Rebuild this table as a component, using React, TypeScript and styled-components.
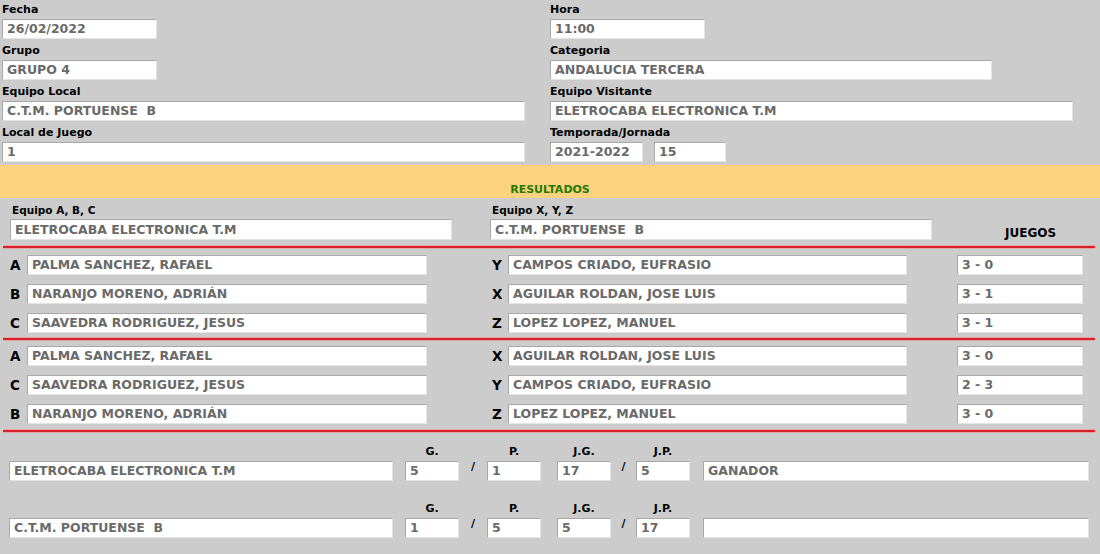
import styled, { createGlobalStyle } from "styled-components";

const GlobalStyle = createGlobalStyle`
  html, body {
    margin: 0;
    padding: 0;
    background: #cccccc;
  }
  body {
    font-family: "DejaVu Sans", Verdana, sans-serif;
    color: #000;
  }
`;

const Page = styled.div`
  width: 1100px;
  min-height: 554px;
  background: #cccccc;
`;

// cabecera con los datos del partido
const Header = styled.div`
  display: grid;
  grid-template-columns: 548px 1fr;
  padding-left: 2px;
`;

const Field = styled.div`
  margin-bottom: 2px;
`;

const Label = styled.div`
  font-size: 11px;
  font-weight: bold;
  line-height: 19px;
  height: 19px;
  white-space: nowrap;
`;

const TextBox = styled.div<{ $w: number; $h?: number }>`
  box-sizing: border-box;
  width: ${(p) => p.$w}px;
  height: ${(p) => p.$h ?? 20}px;
  background: #fff;
  border: 1px solid;
  border-color: #a8a8a8 #e4e4e4 #e4e4e4 #a8a8a8;
  color: #6a6a6a;
  font-size: 12.5px;
  font-weight: bold;
  line-height: ${(p) => (p.$h ?? 20) - 2}px;
  padding-left: 4px;
  white-space: pre;
  overflow: hidden;
`;

const BoxPair = styled.div`
  display: flex;
  gap: 11px;
`;

const Band = styled.div`
  margin-top: 1px;
  height: 33px;
  background: #fdd27e;
  display: flex;
  align-items: flex-end;
  justify-content: center;
  color: #1f7a00;
  font-size: 11px;
  font-weight: bold;
  line-height: 13px;
  padding-bottom: 2px;
  box-sizing: border-box;
`;

const TeamRow = styled.div`
  display: flex;
  align-items: flex-end;
  padding-left: 10px;
`;

const TeamCol = styled.div<{ $gap?: number }>`
  margin-left: ${(p) => p.$gap ?? 0}px;
`;

const TeamLabel = styled.div`
  font-size: 10.5px;
  font-weight: bold;
  line-height: 16px;
  margin-top: 4px;
  margin-bottom: 1px;
  padding-left: 2px;
`;

const JuegosHead = styled.div`
  margin-left: 73px;
  font-size: 12px;
  font-weight: bold;
  line-height: 14px;
`;

const Divider = styled.div<{ $top: number }>`
  margin: ${(p) => p.$top}px 5px 0 3px;
  height: 2px;
  background: #d8222b;
  box-shadow: 0 1px 0 #e6a3a3, 0 -1px 0 #e6a3a3;
`;

const Matches = styled.div<{ $top: number }>`
  display: grid;
  grid-template-columns: 19px 400px 63px 18px 399px 50px 126px;
  row-gap: 9px;
  padding: ${(p) => p.$top}px 0 0 8px;
`;

const Letter = styled.div<{ $col: number }>`
  grid-column: ${(p) => p.$col};
  font-size: 13.5px;
  font-weight: bold;
  line-height: 20px;
  padding-left: 2px;
`;

const Cell = styled.div<{ $col: number }>`
  grid-column: ${(p) => p.$col};
`;

const ScoreRow = styled.div<{ $top: number }>`
  display: flex;
  align-items: flex-end;
  padding: ${(p) => p.$top}px 0 0 9px;
`;

const ScoreCol = styled.div<{ $gap?: number }>`
  display: flex;
  flex-direction: column;
  margin-left: ${(p) => p.$gap ?? 0}px;
`;

const ScoreLabel = styled.div`
  height: 18px;
  font-size: 11px;
  font-weight: bold;
  line-height: 14px;
  padding-top: 2px;
  box-sizing: border-box;
  text-align: center;
`;

const Slash = styled.div<{ $w: number }>`
  width: ${(p) => p.$w}px;
  height: 20px;
  font-size: 11px;
  font-weight: bold;
  line-height: 12px;
  text-align: center;
`;

type Match = [string, string, string, string, string];

const firstRound: Match[] = [
  ["A", "PALMA SANCHEZ, RAFAEL", "Y", "CAMPOS CRIADO, EUFRASIO", "3 - 0"],
  ["B", "NARANJO MORENO, ADRIÁN", "X", "AGUILAR ROLDAN, JOSE LUIS", "3 - 1"],
  ["C", "SAAVEDRA RODRIGUEZ, JESUS", "Z", "LOPEZ LOPEZ, MANUEL", "3 - 1"],
];

const secondRound: Match[] = [
  ["A", "PALMA SANCHEZ, RAFAEL", "X", "AGUILAR ROLDAN, JOSE LUIS", "3 - 0"],
  ["C", "SAAVEDRA RODRIGUEZ, JESUS", "Y", "CAMPOS CRIADO, EUFRASIO", "2 - 3"],
  ["B", "NARANJO MORENO, ADRIÁN", "Z", "LOPEZ LOPEZ, MANUEL", "3 - 0"],
];

const totals = [
  { team: "ELETROCABA ELECTRONICA T.M", g: "5", p: "1", jg: "17", jp: "5", res: "GANADOR" },
  { team: "C.T.M. PORTUENSE  B", g: "1", p: "5", jg: "5", jp: "17", res: "" },
];

function MatchRows({ rows, top }: { rows: Match[]; top: number }) {
  return (
    <Matches $top={top}>
      {rows.flatMap(([l, a, r, b, score], i) => [
        <Letter key={`l${i}`} $col={1}>{l}</Letter>,
        <Cell key={`a${i}`} $col={2}>
          <TextBox $w={400}>{a}</TextBox>
        </Cell>,
        <Letter key={`r${i}`} $col={4}>{r}</Letter>,
        <Cell key={`b${i}`} $col={5}>
          <TextBox $w={399}>{b}</TextBox>
        </Cell>,
        <Cell key={`s${i}`} $col={7}>
          <TextBox $w={126}>{score}</TextBox>
        </Cell>,
      ])}
    </Matches>
  );
}

function App() {
  return (
    <>
      <GlobalStyle />
      <Page>
        <Header>
          <Field>
            <Label>Fecha</Label>
            <TextBox $w={155}>26/02/2022</TextBox>
          </Field>
          <Field>
            <Label>Hora</Label>
            <TextBox $w={155}>11:00</TextBox>
          </Field>
          <Field>
            <Label>Grupo</Label>
            <TextBox $w={155}>GRUPO 4</TextBox>
          </Field>
          <Field>
            <Label>Categoria</Label>
            <TextBox $w={442}>ANDALUCIA TERCERA</TextBox>
          </Field>
          <Field>
            <Label>Equipo Local</Label>
            <TextBox $w={523}>{"C.T.M. PORTUENSE  B"}</TextBox>
          </Field>
          <Field>
            <Label>Equipo Visitante</Label>
            <TextBox $w={523}>ELETROCABA ELECTRONICA T.M</TextBox>
          </Field>
          <Field>
            <Label>Local de Juego</Label>
            <TextBox $w={523}>1</TextBox>
          </Field>
          <Field>
            <Label>Temporada/Jornada</Label>
            <BoxPair>
              <TextBox $w={93}>2021-2022</TextBox>
              <TextBox $w={72}>15</TextBox>
            </BoxPair>
          </Field>
        </Header>

        <Band>RESULTADOS</Band>

        <TeamRow>
          <TeamCol>
            <TeamLabel>Equipo A, B, C</TeamLabel>
            <TextBox $w={442} $h={21}>ELETROCABA ELECTRONICA T.M</TextBox>
          </TeamCol>
          <TeamCol $gap={38}>
            <TeamLabel>Equipo X, Y, Z</TeamLabel>
            <TextBox $w={442} $h={21}>{"C.T.M. PORTUENSE  B"}</TextBox>
          </TeamCol>
          <JuegosHead>JUEGOS</JuegosHead>
        </TeamRow>

        <Divider $top={6} />
        <MatchRows rows={firstRound} top={7} />
        <Divider $top={5} />
        <MatchRows rows={secondRound} top={6} />
        <Divider $top={6} />

        {totals.map((t, i) => (
          <ScoreRow key={t.team} $top={i === 0 ? 11 : 19}>
            <ScoreCol>
              <ScoreLabel />
              <TextBox $w={384}>{t.team}</TextBox>
            </ScoreCol>
            <ScoreCol $gap={12}>
              <ScoreLabel>G.</ScoreLabel>
              <TextBox $w={54}>{t.g}</TextBox>
            </ScoreCol>
            <ScoreCol>
              <ScoreLabel />
              <Slash $w={28}>/</Slash>
            </ScoreCol>
            <ScoreCol>
              <ScoreLabel>P.</ScoreLabel>
              <TextBox $w={54}>{t.p}</TextBox>
            </ScoreCol>
            <ScoreCol $gap={16}>
              <ScoreLabel>J.G.</ScoreLabel>
              <TextBox $w={54}>{t.jg}</TextBox>
            </ScoreCol>
            <ScoreCol>
              <ScoreLabel />
              <Slash $w={25}>/</Slash>
            </ScoreCol>
            <ScoreCol>
              <ScoreLabel>J.P.</ScoreLabel>
              <TextBox $w={54}>{t.jp}</TextBox>
            </ScoreCol>
            <ScoreCol $gap={13}>
              <ScoreLabel />
              <TextBox $w={386}>{t.res}</TextBox>
            </ScoreCol>
          </ScoreRow>
        ))}
      </Page>
    </>
  );
}

export default App;
